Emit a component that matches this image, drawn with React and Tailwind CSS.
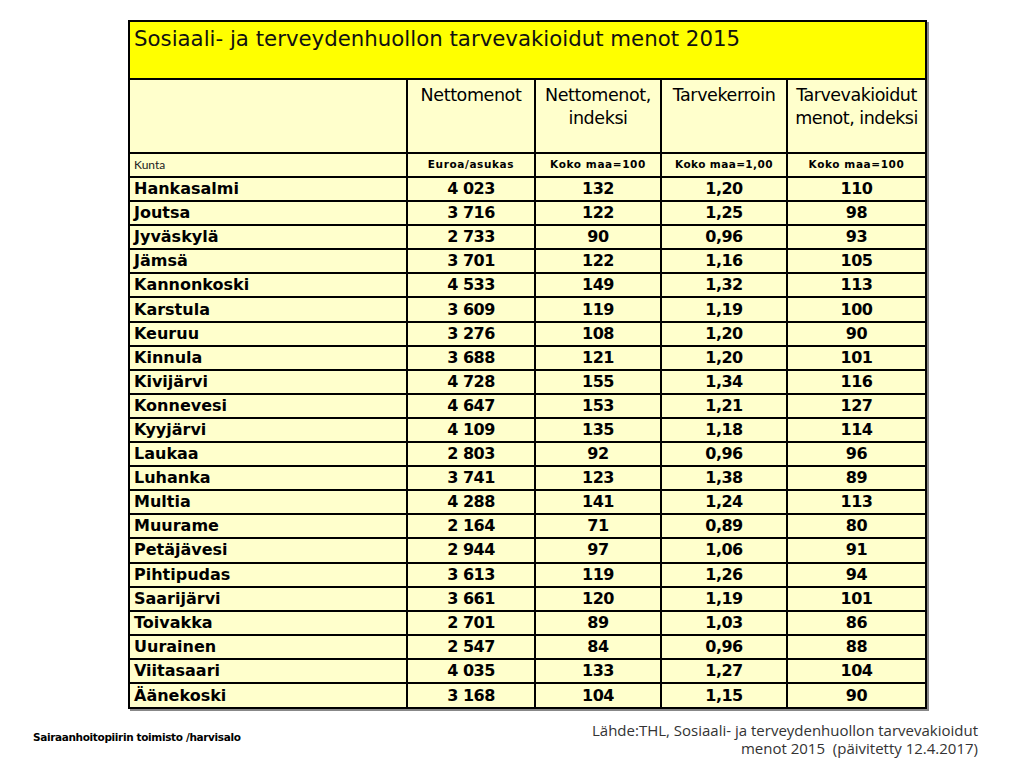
const rows = [
  ["Hankasalmi", "4 023", "132", "1,20", "110"],
  ["Joutsa", "3 716", "122", "1,25", "98"],
  ["Jyväskylä", "2 733", "90", "0,96", "93"],
  ["Jämsä", "3 701", "122", "1,16", "105"],
  ["Kannonkoski", "4 533", "149", "1,32", "113"],
  ["Karstula", "3 609", "119", "1,19", "100"],
  ["Keuruu", "3 276", "108", "1,20", "90"],
  ["Kinnula", "3 688", "121", "1,20", "101"],
  ["Kivijärvi", "4 728", "155", "1,34", "116"],
  ["Konnevesi", "4 647", "153", "1,21", "127"],
  ["Kyyjärvi", "4 109", "135", "1,18", "114"],
  ["Laukaa", "2 803", "92", "0,96", "96"],
  ["Luhanka", "3 741", "123", "1,38", "89"],
  ["Multia", "4 288", "141", "1,24", "113"],
  ["Muurame", "2 164", "71", "0,89", "80"],
  ["Petäjävesi", "2 944", "97", "1,06", "91"],
  ["Pihtipudas", "3 613", "119", "1,26", "94"],
  ["Saarijärvi", "3 661", "120", "1,19", "101"],
  ["Toivakka", "2 701", "89", "1,03", "86"],
  ["Uurainen", "2 547", "84", "0,96", "88"],
  ["Viitasaari", "4 035", "133", "1,27", "104"],
  ["Äänekoski", "3 168", "104", "1,15", "90"],
];

const sans = { fontFamily: '"DejaVu Sans", "Liberation Sans", sans-serif' };
const calibriLike = { fontFamily: '"Open Sans", "Lato", sans-serif' };

export default function App() {
  return (
    <div className="w-[1024px] h-[768px] bg-white relative overflow-hidden" style={sans}>
      <div className="pt-[20px] pl-[128px]">
        <div className="w-[799px] border-2 border-black shadow-[2px_2px_0_#888]">
          <div className="h-[58px] bg-[#ffff00] border-b-2 border-black px-[4px] pt-[1px]">
            <span className="text-[21.3px] text-[#111]">
              Sosiaali- ja terveydenhuollon tarvevakioidut menot 2015
            </span>
          </div>
          <table className="w-[795px] border-collapse bg-[#ffffcc] text-black table-fixed">
            <colgroup>
              <col className="w-[277px]" />
              <col className="w-[128px]" />
              <col className="w-[126px]" />
              <col className="w-[126px]" />
              <col className="w-[138px]" />
            </colgroup>
            <tbody>
              <tr className="h-[73px] align-top">
                <td className="border-r-2 border-black"></td>
                <td className="border-r-2 border-black text-center text-[17.5px] leading-[23px] pt-[4px] tracking-[-0.4px]">Nettomenot</td>
                <td className="border-r-2 border-black text-center text-[17.5px] leading-[23px] pt-[4px] tracking-[-0.4px]">Nettomenot,<br />indeksi</td>
                <td className="border-r-2 border-black text-center text-[17.5px] leading-[23px] pt-[4px] tracking-[-0.4px]">Tarvekerroin</td>
                <td className="text-center text-[17.5px] leading-[23px] pt-[4px] tracking-[-0.5px]">Tarvevakioidut<br />menot, indeksi</td>
              </tr>
              <tr className="h-[24px] border-t-2 border-b-2 border-black">
                <td className="border-r-2 border-black px-[4px] text-[12px] text-[#222]" style={{ fontFamily: '"Lato", "Liberation Sans", sans-serif' }}>Kunta</td>
                <td className="border-r-2 border-black text-center text-[10.5px] font-bold tracking-[0.6px]">Euroa/asukas</td>
                <td className="border-r-2 border-black text-center text-[10.5px] font-bold tracking-[0.6px]">Koko maa=100</td>
                <td className="border-r-2 border-black text-center text-[10.5px] font-bold tracking-[0.4px]">Koko maa=1,00</td>
                <td className="text-center text-[10.5px] font-bold tracking-[0.6px]">Koko maa=100</td>
              </tr>
              {rows.map((r, i) => (
                <tr key={i} className="h-[24.1px] border-b-2 border-black last:border-b-0 text-[16px] font-bold leading-none">
                  <td className="border-r-2 border-black px-[4px] text-left">{r[0]}</td>
                  <td className="border-r-2 border-black text-center tracking-[-0.5px]">{r[1]}</td>
                  <td className="border-r-2 border-black text-center tracking-[-0.5px]">{r[2]}</td>
                  <td className="border-r-2 border-black text-center tracking-[-0.5px]">{r[3]}</td>
                  <td className="text-center tracking-[-0.5px]">{r[4]}</td>
                </tr>
              ))}
            </tbody>
          </table>
        </div>
      </div>
      <div className="flex justify-between items-start pl-[33px] pr-[46px] pt-[12px]">
        <div className="text-[10.5px] font-bold text-black pt-[9px] tracking-[-0.35px]">Sairaanhoitopiirin toimisto /harvisalo</div>
        <div className="text-right text-[15px] leading-[18px] text-[#333]" style={calibriLike}>
          <div>Lähde:THL, Sosiaali- ja terveydenhuollon tarvevakioidut</div>
          <div>menot 2015&nbsp;&nbsp;(päivitetty 12.4.2017)</div>
        </div>
      </div>
    </div>
  );
}
